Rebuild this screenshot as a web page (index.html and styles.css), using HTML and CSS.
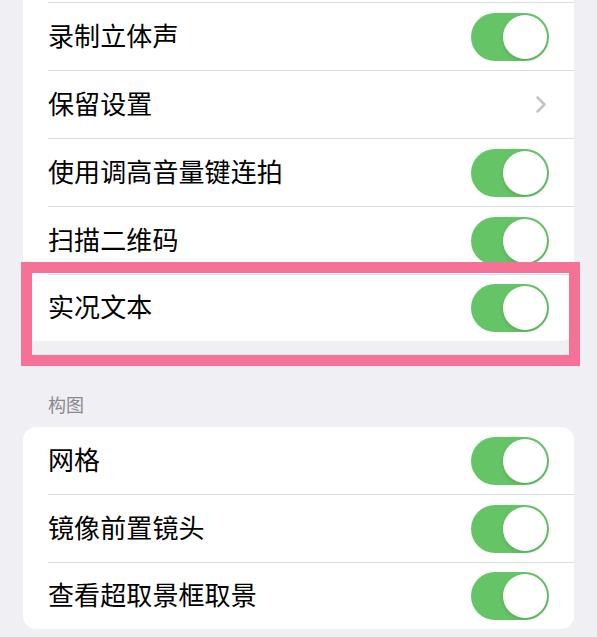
FILE: index.html
```html
<!DOCTYPE html>
<html lang="zh-CN">
<head>
<meta charset="utf-8">
<link rel="stylesheet" href="styles.css">
</head>
<body>
<div class="page">
  <div class="card card-top">
    <div class="row"><div class="row-inner"><span class="label">录制立体声</span><span class="toggle"><span class="knob"></span></span></div></div>
    <div class="row"><div class="row-inner"><span class="label">保留设置</span><svg class="chevron" width="12" height="19" viewBox="0 0 12 19"><polyline points="2.5,2.5 9.5,9.5 2.5,16.5" fill="none" stroke="#c4c4c7" stroke-width="2.6" stroke-linecap="round" stroke-linejoin="round"/></svg></div></div>
    <div class="row"><div class="row-inner"><span class="label">使用调高音量键连拍</span><span class="toggle"><span class="knob"></span></span></div></div>
    <div class="row"><div class="row-inner"><span class="label">扫描二维码</span><span class="toggle"><span class="knob"></span></span></div></div>
    <div class="row row-marked"><div class="row-inner"><span class="label">实况文本</span><span class="toggle"><span class="knob"></span></span></div><div class="mark"></div></div>
  </div>
  <div class="section-header">构图</div>
  <div class="card">
    <div class="row row-first"><div class="row-inner"><span class="label">网格</span><span class="toggle"><span class="knob"></span></span></div></div>
    <div class="row"><div class="row-inner"><span class="label">镜像前置镜头</span><span class="toggle"><span class="knob"></span></span></div></div>
    <div class="row row-last"><div class="row-inner"><span class="label">查看超取景框取景</span><span class="toggle"><span class="knob"></span></span></div></div>
  </div>
</div>
</body>
</html>
```
FILE: styles.css
```css
html, body {
  margin: 0;
  padding: 0;
  background: #efeff4;
}
body {
  font-family: "Noto Sans CJK SC", "Noto Sans", sans-serif;
  color: #000;
}
.page {
  width: 597px;
  height: 637px;
  overflow: hidden;
}
.card {
  margin: 0 23px;
  background: #fff;
  border-radius: 13px;
}
.card-top {
  border-radius: 0 0 13px 13px;
  padding-top: 2px;
}
.row {
  padding-left: 25px;
  position: relative;
}
.row-inner {
  height: 67px;
  border-top: 1px solid #dcdcdf;
  display: flex;
  align-items: center;
  justify-content: space-between;
  padding-right: 25px;
}
.row-first .row-inner {
  border-top: none;
}
.row-last .row-inner {
  height: 66px;
}
.label {
  font-size: 26px;
  line-height: 1.2;
  letter-spacing: 0.1px;
  margin-bottom: 4px;
}
.toggle {
  width: 78px;
  height: 48px;
  border-radius: 24px;
  background: #65c466;
  position: relative;
  flex: none;
}
.knob {
  position: absolute;
  right: 2px;
  top: 2px;
  width: 44px;
  height: 44px;
  border-radius: 50%;
  background: #fff;
  box-shadow: 0 2px 4px rgba(0, 0, 0, 0.12);
}
.chevron {
  margin-right: 2px;
}
.row-marked .row-inner {
  height: 66px;
}
.mark {
  position: absolute;
  left: -2px;
  right: -6px;
  top: -12px;
  bottom: -25px;
  border: 11px solid #f57196;
  pointer-events: none;
}
.section-header {
  margin: 51px 0 11px 48px;
  font-size: 18px;
  line-height: 24px;
  color: #8a8a8e;
}
```
